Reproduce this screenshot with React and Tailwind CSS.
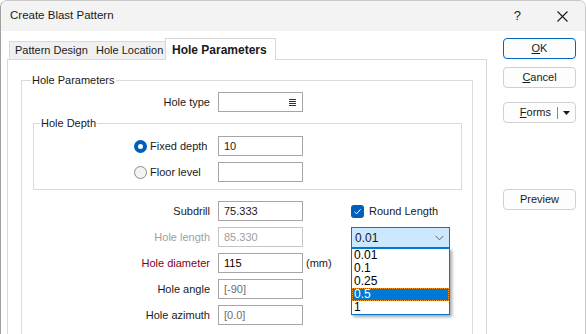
import React from 'react';

const Input = ({ value = '', muted = false, dim = false, icon = false, className = '' }) => (
  <div
    className={`w-[85px] h-[20px] border flex items-center pl-[5px] pr-[6px] text-[11px] bg-white ${
      dim ? 'border-[#c4c4c4] text-[#a0a0a0]' : 'border-[#a6a6a6]'
    } ${muted ? 'text-[#6d6d6d]' : ''} ${!dim && !muted ? 'text-[#1a1a1a]' : ''} ${className}`}
  >
    <span className="flex-1">{value}</span>
    {icon && (
      <svg width="7" height="7" viewBox="0 0 7 7" className="text-[#333]">
        <rect x="0" y="0" width="7" height="1" fill="currentColor" />
        <rect x="0" y="2" width="7" height="1" fill="currentColor" />
        <rect x="0" y="4" width="7" height="1" fill="currentColor" />
        <rect x="0" y="6" width="7" height="1" fill="currentColor" />
      </svg>
    )}
  </div>
);

const Row = ({ label, labelClass = 'text-[#1a1a1a]', children }) => (
  <div className="flex items-center h-[20px]">
    <div className={`w-[188px] text-right text-[11px] ${labelClass}`}>{label}</div>
    <div className="ml-[8px] flex items-center">{children}</div>
  </div>
);

const Radio = ({ checked }) =>
  checked ? (
    <span className="w-[13px] h-[13px] rounded-full bg-[#005fb8] flex items-center justify-center">
      <span className="w-[5px] h-[5px] rounded-full bg-white" />
    </span>
  ) : (
    <span className="w-[13px] h-[13px] rounded-full border border-[#8a8a8a] bg-[#f3f3f3]" />
  );

const Button = ({ children, primary = false, className = '' }) => (
  <div
    className={`w-[73px] h-[21px] rounded-[4px] border flex items-center justify-center text-[11px] text-[#1a1a1a] bg-[#fdfdfd] ${
      primary ? 'border-[#0067c0]' : 'border-[#d0d0d0]'
    } ${className}`}
  >
    {children}
  </div>
);

export default function App() {
  const items = ['0.01', '0.1', '0.25', '0.5', '1'];

  return (
    <div className="w-[586px] h-[334px] overflow-hidden bg-white border-l border-t border-r border-l-[#a0a0a0] border-t-[#c8c8c8] border-r-[#c8c8c8] rounded-t-[7px] font-['Liberation_Sans',sans-serif] text-[#1a1a1a]">
      {/* Title bar */}
      <div className="h-[30px] bg-[#f3f3f3] flex items-center pl-[9px]">
        <span className="text-[11.5px] text-[#1a1a1a]">Create Blast Pattern</span>
        <span className="ml-auto text-[13px] text-[#1a1a1a] mr-[36px]">?</span>
        <svg width="11" height="11" viewBox="0 0 11 11" className="mr-[17px]">
          <path d="M0.5 0.5 L10.5 10.5 M10.5 0.5 L0.5 10.5" stroke="#1a1a1a" strokeWidth="1.1" />
        </svg>
      </div>

      <div className="flex">
        {/* Left: tabs + panel */}
        <div className="pl-[6px]">
          <div className="flex items-end h-[28px] pt-[7px] pl-[2px]">
            <div className="w-[83px] h-[18px] border-t border-l border-r border-[#d9d9d9] bg-[#f0f0f0] flex items-center pl-[5px] text-[11px]">
              Pattern Design
            </div>
            <div className="w-[75px] h-[18px] -ml-px border-t border-r border-[#d9d9d9] bg-[#f0f0f0] flex items-center pl-[5px] text-[11px]">
              Hole Location
            </div>
            <div className="relative z-10 w-[111px] h-[22px] -mb-px -ml-px border-t border-l border-r border-[#d9d9d9] bg-white flex items-center pl-[6px] text-[12px] font-bold">
              Hole Parameters
            </div>
          </div>

          <div className="w-[480px] h-[290px] border border-[#d9d9d9] px-[13px] pt-[13px]">
            <fieldset className="border border-[#dadada] w-[452px] h-[300px] px-0">
              <legend className="ml-[9px] px-[1px] text-[11px] leading-[14px]">Hole Parameters</legend>

              <div className="pt-[5px]">
                <Row label="Hole type">
                  <Input icon />
                </Row>
              </div>

              <fieldset className="mt-[4px] ml-[11px] w-[429px] border border-[#dadada] px-0 pb-[7px]">
                <legend className="ml-[6px] px-[1px] text-[11px] leading-[14px]">Hole Depth</legend>
                <div className="pt-[6px] flex flex-col gap-[6px]">
                  <div className="flex items-center h-[20px]">
                    <div className="w-[184px] pl-[100px] flex items-center gap-[3px] text-[11px]">
                      <Radio checked />
                      <span>Fixed depth</span>
                    </div>
                    <Input value="10" />
                  </div>
                  <div className="flex items-center h-[20px]">
                    <div className="w-[184px] pl-[100px] flex items-center gap-[3px] text-[11px]">
                      <Radio />
                      <span>Floor level</span>
                    </div>
                    <Input />
                  </div>
                </div>
              </fieldset>

              <div className="flex mt-[11px]">
                <div className="w-[329px] flex flex-col gap-[6px]">
                  <Row label="Subdrill">
                    <Input value="75.333" />
                  </Row>
                  <Row label="Hole length" labelClass="text-[#a0a0a0]">
                    <Input value="85.330" dim />
                  </Row>
                  <Row label="Hole diameter" labelClass="text-[#800020]">
                    <Input value="115" className="text-black" />
                    <span className="ml-[3px] text-[11px]">(mm)</span>
                  </Row>
                  <Row label="Hole angle">
                    <Input value="[-90]" muted />
                  </Row>
                  <Row label="Hole azimuth">
                    <Input value="[0.0]" muted />
                  </Row>
                </div>

                <div className="relative w-[99px] flex flex-col gap-[6px]">
                  <div className="h-[20px] flex items-center gap-[5px] text-[11px]">
                    <span className="w-[13px] h-[13px] rounded-[3px] bg-[#005fb8] flex items-center justify-center">
                      <svg width="9" height="9" viewBox="0 0 9 9">
                        <path d="M1.5 4.8 L3.6 6.8 L7.6 2.2" fill="none" stroke="white" strokeWidth="1" />
                      </svg>
                    </span>
                    <span>Round Length</span>
                  </div>
                  <div className="relative h-[21px]">
                    <div className="h-[21px] border border-[#0078d7] bg-[#cce8ff] flex items-center pl-[3px] pr-[5px] text-[12px]">
                      <span className="flex-1">0.01</span>
                      <svg width="9" height="6" viewBox="0 0 9 6">
                        <path d="M0.5 0.8 L4.5 4.8 L8.5 0.8" fill="none" stroke="#606060" strokeWidth="1" />
                      </svg>
                    </div>
                    <div className="absolute left-0 top-full w-[99px] bg-white border border-[#0078d7] shadow-[2px_2px_3px_rgba(0,0,0,0.35)] z-20">
                      {items.map((it) => (
                        <div
                          key={it}
                          className={`h-[13px] leading-[13px] pl-[2px] text-[12px] ${
                            it === '0.5'
                              ? 'bg-[#0078d7] text-white outline-1 outline-dotted outline-[#ff9a1f] -outline-offset-1'
                              : 'text-black'
                          }`}
                        >
                          {it}
                        </div>
                      ))}
                    </div>
                  </div>
                </div>
              </div>
            </fieldset>
          </div>
        </div>

        {/* Right: buttons */}
        <div className="ml-[16px] pt-[7px] flex flex-col">
          <Button primary>
            <span><span className="underline">O</span>K</span>
          </Button>
          <Button className="mt-[8px]">
            <span><span className="underline">C</span>ancel</span>
          </Button>
          <div className="mt-[14px] w-[73px] h-[21px] rounded-[4px] border border-[#d0d0d0] bg-[#fdfdfd] flex items-center text-[11px]">
            <div className="flex-1 flex justify-end pr-[6px]">
              <span><span className="underline">F</span>orms</span>
            </div>
            <div className="w-px h-[12px] bg-[#8a8a8a]" />
            <div className="w-[17px] flex justify-center">
              <svg width="7" height="4" viewBox="0 0 7 4">
                <path d="M0 0 L7 0 L3.5 4 Z" fill="#1a1a1a" />
              </svg>
            </div>
          </div>
          <Button className="mt-[66px]">Preview</Button>
        </div>
      </div>
    </div>
  );
}
